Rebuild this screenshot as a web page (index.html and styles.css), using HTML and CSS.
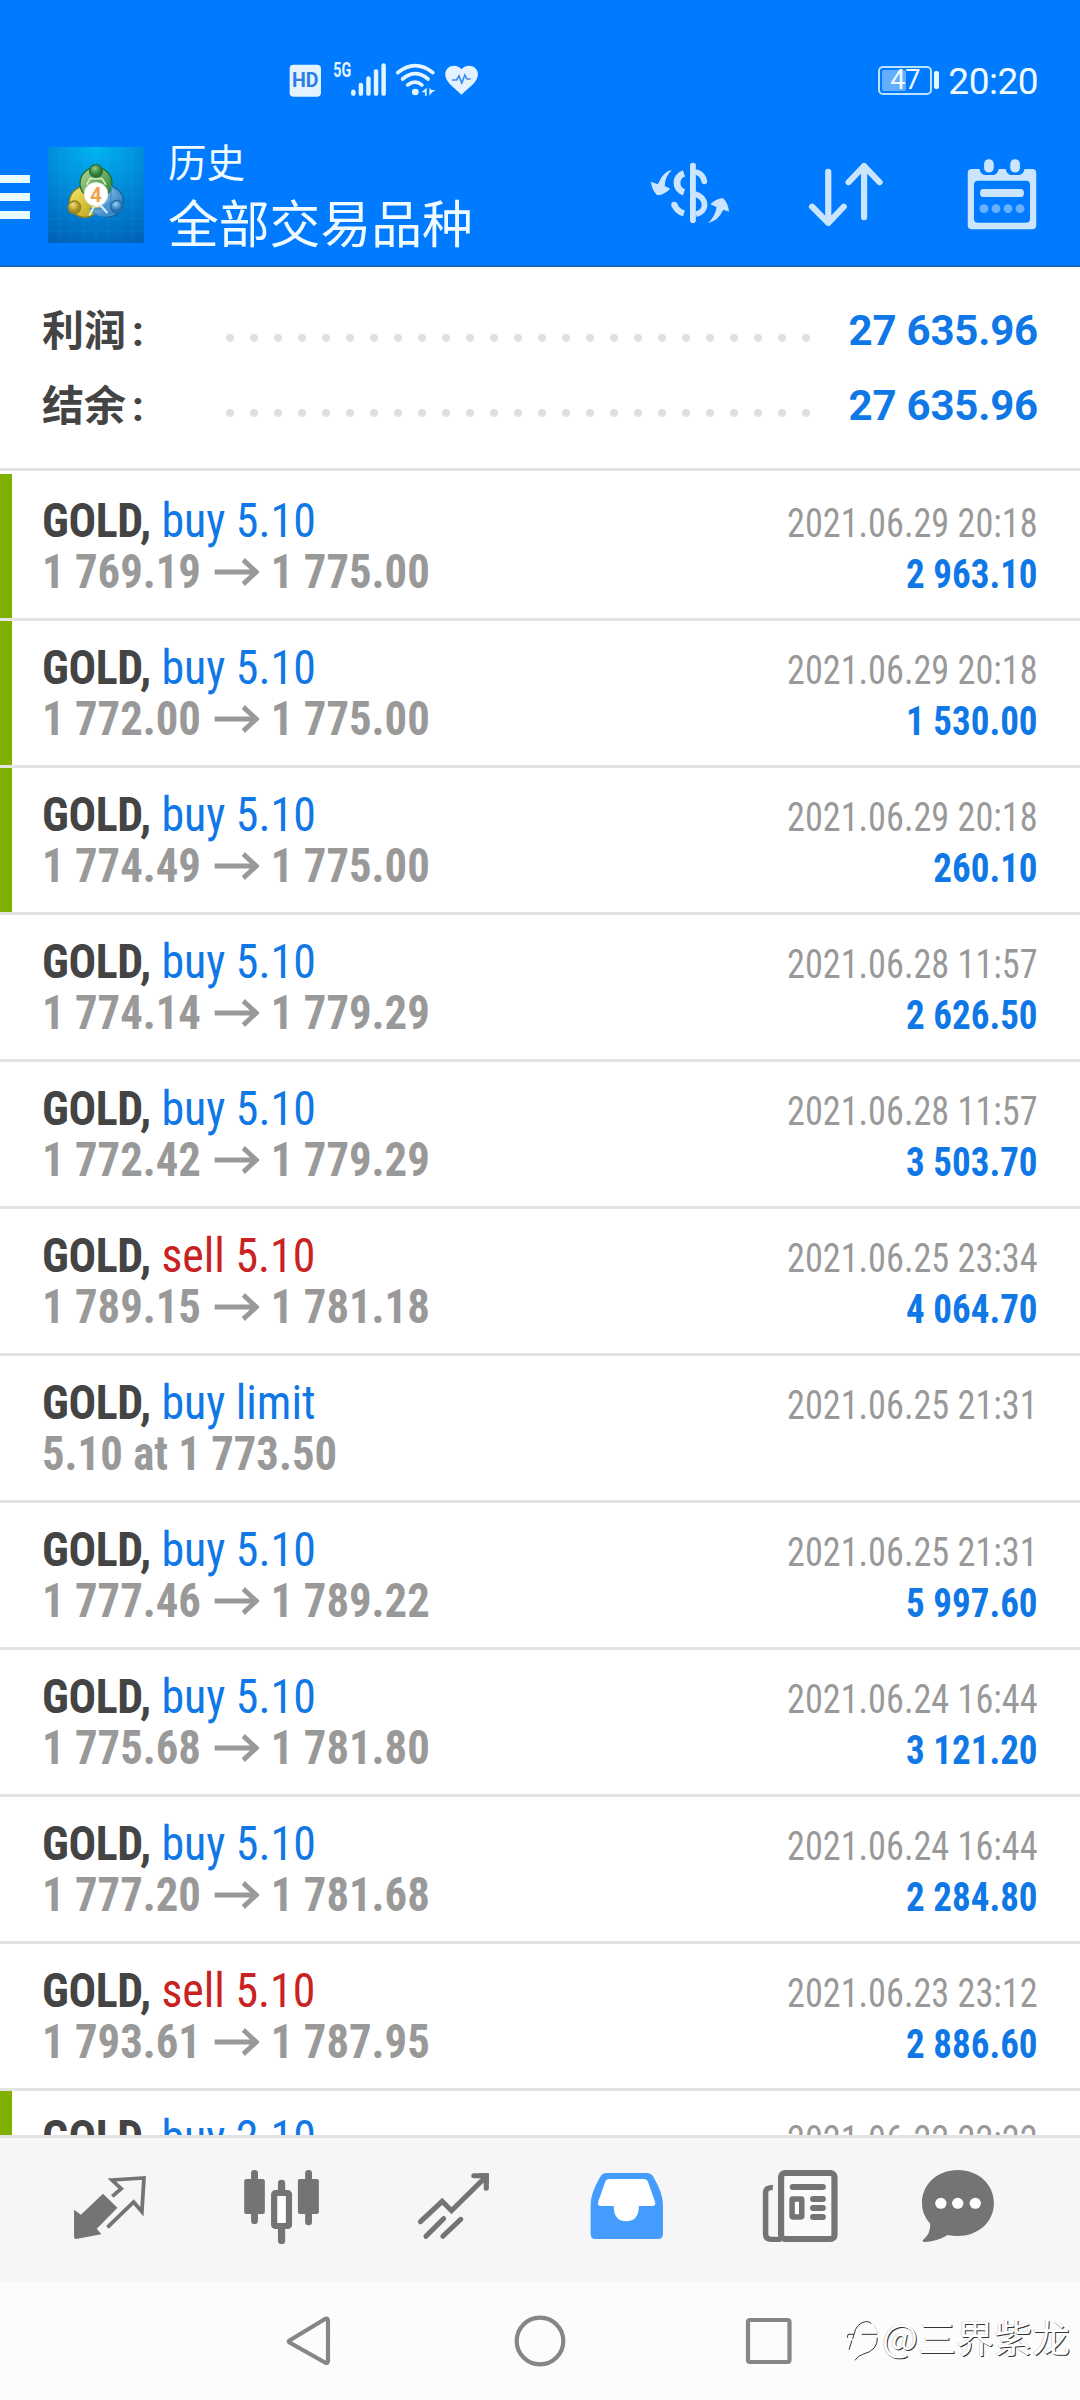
FILE: index.html
```html
<!DOCTYPE html>
<html lang="zh-CN">
<head>
<meta charset="utf-8">
<title>历史</title>
<link rel="stylesheet" href="styles.css">
</head>
<body>
<div class="screen">
  <header class="top">
    <div class="status">
      <svg class="status-icons" viewBox="813 -120 610 354" preserveAspectRatio="none">
        <rect x="841" y="74" width="91" height="96" rx="12" fill="#e4f1ff"/>
        <text class="hd" x="848" y="142" textLength="77" lengthAdjust="spacingAndGlyphs">HD</text>
        <text class="net" x="968" y="111" textLength="52" lengthAdjust="spacingAndGlyphs">5G</text>
        <g stroke="#e4f4ff" stroke-width="13" stroke-linecap="round">
          <path d="M1026 155v6M1048 135v26M1070 115v46M1092 94v67M1114 76v85"/>
        </g>
        <g fill="none" stroke="#e4f4ff" stroke-width="11" stroke-linecap="round">
          <path d="M1155 98Q1206 56 1257 98M1169 117Q1206 85 1243 117M1184 135Q1206 118 1225 135"/>
        </g>
        <circle cx="1206" cy="156" r="10" fill="#e4f4ff"/>
        <path d="M1239 143v24h-5v-10h-10zM1247 143v24l8-10 10-7h-12z" fill="#e4f4ff"/>
        <path d="M1340 164C1318 142 1293 127 1293 103C1293 75 1327 69 1340 88C1353 69 1388 75 1388 103C1388 127 1362 142 1340 164z" fill="#e4f1ff"/>
        <path d="M1312 120h14l7-12 8 21 9-24 6 12h11" fill="none" stroke="#3b8cf0" stroke-width="5"/>
      </svg>
      <div class="status-right">
        <div class="battery"><span class="battery-level"></span><span class="battery-text">47</span></div>
        <span class="battery-nub"></span>
        <span class="clock">20:20</span>
      </div>
    </div>
    <div class="appbar">
      <div class="menu"><i></i><i></i><i></i></div>
      <svg class="logo" viewBox="24 21 288 288">
        <defs>
          <radialGradient id="sky" cx=".5" cy="0" r="1.1"><stop offset="0" stop-color="#00b4f2"/><stop offset=".55" stop-color="#0083d4"/><stop offset="1" stop-color="#0061b4"/></radialGradient>
          <linearGradient id="gr" x2="1" y2="1"><stop offset="0" stop-color="#b8dc9a"/><stop offset="1" stop-color="#1c7a2c"/></linearGradient>
          <linearGradient id="ye" x2="1" y2="1"><stop offset="0" stop-color="#f4ea6a"/><stop offset="1" stop-color="#b89a10"/></linearGradient>
          <linearGradient id="bl" x2="1" y2="1"><stop offset="0" stop-color="#a8dcf6"/><stop offset="1" stop-color="#1a6eb8"/></linearGradient>
          <radialGradient id="gb" cx=".4" cy=".3"><stop offset="0" stop-color="#94cc80"/><stop offset="1" stop-color="#2a7c34"/></radialGradient>
          <radialGradient id="yb" cx=".4" cy=".3"><stop offset="0" stop-color="#f0e47a"/><stop offset="1" stop-color="#a58c1c"/></radialGradient>
          <radialGradient id="bb" cx=".4" cy=".3"><stop offset="0" stop-color="#94d4f4"/><stop offset="1" stop-color="#1f70b4"/></radialGradient>
        </defs>
        <path fill="url(#sky)" d="M24 21h288v288H24z"/>
        <path d="M60 21v288M96 21v288M132 21v288M168 21v288M204 21v288M240 21v288M276 21v288M24 57h288M24 93h288M24 129h288M24 165h288M24 201h288M24 237h288M24 273h288" stroke="#5cc8f4" stroke-opacity=".14" stroke-width="2"/>
        <g stroke-width="4">
          <circle cx="204" cy="184" r="46" fill="url(#bl)" stroke="#17609c"/>
          <circle cx="134" cy="186" r="46" fill="url(#ye)" stroke="#8c7e16"/>
          <circle cx="168" cy="130" r="48" fill="url(#gr)" stroke="#226e2c"/>
          <path d="M215 140q45 35 22 70q-20 24-60 16q-16-6-26-20q36 8 60-20z" fill="url(#bl)" stroke="#3c90cc"/>
          <path d="M140 134l10-18h36l12 18" fill="none" stroke="#d4ecc4" stroke-width="5"/>
          <path d="M148 227l14-28h22l18 20" fill="none" stroke="#d8eefa" stroke-width="6"/>
          <circle cx="168" cy="93" r="19" fill="url(#gb)" stroke="#2a7030"/>
          <circle cx="103" cy="202" r="19" fill="url(#yb)" stroke="#928020"/>
          <circle cx="231" cy="200" r="19" fill="url(#bb)" stroke="#226aa4"/>
        </g>
        <circle cx="168" cy="163" r="36" fill="#fff" stroke="#c8d6c0" stroke-width="2"/>
        <text class="logo-num" x="168" y="186" text-anchor="middle">4</text>
      </svg>
      <div class="titles"><div class="subtitle">历史</div><div class="title">全部交易品种</div></div>
      <div class="tools">
        <svg class="tool" viewBox="209 234 453 444" preserveAspectRatio="none">
          <g fill="none" stroke="#cce5ff" stroke-width="17">
            <path stroke-linecap="round" d="M444 377v164"/>
            <path stroke-width="20" d="M418 400C391 409 391 448 418 457"/>
            <path stroke-width="18" d="M390 494Q397 514 418 520"/>
            <path stroke-linecap="round" d="M456 397Q474 404 477 424"/>
            <path d="M450 462C485 472 488 514 453 523"/>
          </g>
          <circle cx="390" cy="494" r="9" fill="#cce5ff"/>
          <path fill="#cce5ff" d="M383 390Q358 393 342 433L322 425Q324 448 340 466Q364 463 378 446L362 438Q362 410 383 390zM488 549Q518 542 532 509L549 515Q546 488 531 474Q510 476 495 493L513 502Q508 530 488 549z"/>
        </svg>
        <svg class="tool" viewBox="662 234 453 444" preserveAspectRatio="none">
          <path fill="none" stroke="#cce5ff" stroke-width="18" stroke-linecap="round" stroke-linejoin="round" d="M837 395v154M790 500l47 49 45-49M941 532V378M896 427l45-49 45 49"/>
        </svg>
        <svg class="tool" viewBox="1115 234 453 444" preserveAspectRatio="none">
          <path fill="#cce5ff" fill-rule="evenodd" d="M1254 387h22q4 18 18 18h20q14 0 18-18h20q4 18 18 18h19q14 0 18-18h22q12 0 12 12v157q0 12-12 12h-175q-12 0-12-12v-157q0-12 12-12zM1272 422q-12 0-12 12v102q0 12 12 12h139q12 0 12-12v-102q0-12-12-12z"/>
          <rect x="1288" y="356" width="31" height="43" rx="15" fill="#cce5ff" stroke="#007aff" stroke-width="3"/><rect x="1364" y="356" width="31" height="43" rx="15" fill="#cce5ff" stroke="#007aff" stroke-width="3"/>
          <rect x="1278" y="447" width="127" height="24" rx="10" fill="#cce5ff"/>
          <g fill="#66b0ff"><circle cx="1289" cy="506" r="13"/><circle cx="1324" cy="506" r="13"/><circle cx="1359" cy="506" r="13"/><circle cx="1394" cy="506" r="13"/></g>
        </svg>
      </div>
    </div>
  </header>

  <section class="summary">
    <div class="sum-row"><span class="sum-label">利润<span class="colon">:</span></span><span class="dots"></span><span class="sum-value">27 635.96</span></div>
    <div class="sum-row"><span class="sum-label">结余<span class="colon">:</span></span><span class="dots"></span><span class="sum-value">27 635.96</span></div>
  </section>

  <main class="list">
    <div class="deal new"><div class="left"><div class="name"><b>GOLD,</b> <span class="buy">buy 5.10</span></div><div class="price">1 769.19<svg class="arrow" viewBox="0 0 48 28"><path d="M0 14h45M31 2l14 12-14 12"/></svg>1 775.00</div></div><div class="right"><div class="date">2021.06.29 20:18</div><div class="profit">2 963.10</div></div></div>
    <div class="deal new"><div class="left"><div class="name"><b>GOLD,</b> <span class="buy">buy 5.10</span></div><div class="price">1 772.00<svg class="arrow" viewBox="0 0 48 28"><path d="M0 14h45M31 2l14 12-14 12"/></svg>1 775.00</div></div><div class="right"><div class="date">2021.06.29 20:18</div><div class="profit">1 530.00</div></div></div>
    <div class="deal new"><div class="left"><div class="name"><b>GOLD,</b> <span class="buy">buy 5.10</span></div><div class="price">1 774.49<svg class="arrow" viewBox="0 0 48 28"><path d="M0 14h45M31 2l14 12-14 12"/></svg>1 775.00</div></div><div class="right"><div class="date">2021.06.29 20:18</div><div class="profit">260.10</div></div></div>
    <div class="deal"><div class="left"><div class="name"><b>GOLD,</b> <span class="buy">buy 5.10</span></div><div class="price">1 774.14<svg class="arrow" viewBox="0 0 48 28"><path d="M0 14h45M31 2l14 12-14 12"/></svg>1 779.29</div></div><div class="right"><div class="date">2021.06.28 11:57</div><div class="profit">2 626.50</div></div></div>
    <div class="deal"><div class="left"><div class="name"><b>GOLD,</b> <span class="buy">buy 5.10</span></div><div class="price">1 772.42<svg class="arrow" viewBox="0 0 48 28"><path d="M0 14h45M31 2l14 12-14 12"/></svg>1 779.29</div></div><div class="right"><div class="date">2021.06.28 11:57</div><div class="profit">3 503.70</div></div></div>
    <div class="deal"><div class="left"><div class="name"><b>GOLD,</b> <span class="sell">sell 5.10</span></div><div class="price">1 789.15<svg class="arrow" viewBox="0 0 48 28"><path d="M0 14h45M31 2l14 12-14 12"/></svg>1 781.18</div></div><div class="right"><div class="date">2021.06.25 23:34</div><div class="profit">4 064.70</div></div></div>
    <div class="deal"><div class="left"><div class="name"><b>GOLD,</b> <span class="buy">buy limit</span></div><div class="price">5.10 at 1 773.50</div></div><div class="right"><div class="date">2021.06.25 21:31</div></div></div>
    <div class="deal"><div class="left"><div class="name"><b>GOLD,</b> <span class="buy">buy 5.10</span></div><div class="price">1 777.46<svg class="arrow" viewBox="0 0 48 28"><path d="M0 14h45M31 2l14 12-14 12"/></svg>1 789.22</div></div><div class="right"><div class="date">2021.06.25 21:31</div><div class="profit">5 997.60</div></div></div>
    <div class="deal"><div class="left"><div class="name"><b>GOLD,</b> <span class="buy">buy 5.10</span></div><div class="price">1 775.68<svg class="arrow" viewBox="0 0 48 28"><path d="M0 14h45M31 2l14 12-14 12"/></svg>1 781.80</div></div><div class="right"><div class="date">2021.06.24 16:44</div><div class="profit">3 121.20</div></div></div>
    <div class="deal"><div class="left"><div class="name"><b>GOLD,</b> <span class="buy">buy 5.10</span></div><div class="price">1 777.20<svg class="arrow" viewBox="0 0 48 28"><path d="M0 14h45M31 2l14 12-14 12"/></svg>1 781.68</div></div><div class="right"><div class="date">2021.06.24 16:44</div><div class="profit">2 284.80</div></div></div>
    <div class="deal"><div class="left"><div class="name"><b>GOLD,</b> <span class="sell">sell 5.10</span></div><div class="price">1 793.61<svg class="arrow" viewBox="0 0 48 28"><path d="M0 14h45M31 2l14 12-14 12"/></svg>1 787.95</div></div><div class="right"><div class="date">2021.06.23 23:12</div><div class="profit">2 886.60</div></div></div>
    <div class="deal new"><div class="left"><div class="name"><b>GOLD,</b> <span class="buy">buy 2.10</span></div></div><div class="right"><div class="date">2021.06.22 22:22</div></div></div>
  </main>

  <nav class="tabs">
    <svg class="tab" viewBox="69.7 237 499.4 432" preserveAspectRatio="none">
      <path fill="#747474" d="M299 404L341 446L281 509L294 526L221 540Q215 540 215 534V452L235 467z"/>
      <path fill="none" stroke="#747474" stroke-width="11" d="M326 412L352 389L325 363L418 357L412 458L388 429L312 505"/>
    </svg>
    <svg class="tab" viewBox="569.1 237 499.4 432" preserveAspectRatio="none">
      <g fill="#747474"><rect x="709" y="360" width="60" height="105" rx="6"/><rect x="865" y="360" width="61" height="105" rx="6"/><rect x="729" y="333" width="20" height="162" rx="10"/><rect x="886" y="333" width="20" height="166" rx="10"/><rect x="807" y="362" width="21" height="44" rx="10"/><rect x="807" y="498" width="21" height="57" rx="10"/></g>
      <rect x="796" y="402" width="43" height="99" rx="4" fill="#fff" stroke="#747474" stroke-width="18"/>
    </svg>
    <svg class="tab" viewBox="1068.6 237 499.4 432" preserveAspectRatio="none">
      <g fill="none" stroke="#747474" stroke-width="15" stroke-linecap="round"><path d="M1221 488L1284 427L1311 455L1408 356M1376 350H1412V388"/><path d="M1237 532L1288 479M1286 532L1338 481"/></g>
      <path fill="#747474" d="M1390 343h30v32z"/>
    </svg>
    <svg class="tab" viewBox="0 237 499.4 432" preserveAspectRatio="none">
      <path fill="#459cff" d="M193 342H309Q323 342 329 353Q357 402 357 437V526Q357 540 343 540H161Q147 540 147 526V437Q147 402 175 353Q181 342 193 342z"/>
      <path fill="#fff" d="M202 360H300Q310 360 314 370L334 428Q338 441 325 441H287Q287 487 250 487Q214 487 214 441H178Q165 441 169 428L189 370Q192 360 202 360z"/>
    </svg>
    <svg class="tab" viewBox="499.4 237 499.4 432" preserveAspectRatio="none">
      <path fill="none" stroke="#747474" stroke-width="16" d="M676 386Q655 384 655 402V525Q655 541 672 541H700"/>
      <rect x="700" y="342" width="155" height="198" rx="12" fill="#fafafa" stroke="#747474" stroke-width="18"/>
      <g fill="#747474"><rect x="725" y="375" width="105" height="18" rx="9"/><rect x="784" y="411" width="46" height="18" rx="9"/><rect x="784" y="438" width="46" height="18" rx="9"/><rect x="784" y="465" width="46" height="18" rx="9"/></g>
      <rect x="732" y="420" width="28" height="54" rx="2" fill="#fff" stroke="#747474" stroke-width="16"/>
    </svg>
    <svg class="tab tab-chat" viewBox="998.9 237 499.4 432" preserveAspectRatio="none">
      <path fill="#747474" d="M1213 333C1275 333 1318 378 1318 432C1318 492 1270 531 1213 531Q1198 531 1184 528Q1150 549 1116 549Q1108 548 1113 542Q1135 523 1133 494Q1109 467 1109 432C1109 378 1152 333 1213 333z"/>
      <g fill="#fff"><circle cx="1164" cy="433" r="16.5"/><circle cx="1213" cy="433" r="16.5"/><circle cx="1264" cy="433" r="16.5"/></g>
    </svg>
  </nav>

  <footer class="sysnav">
    <svg class="sys" viewBox="0 0 1080 118">
      <g fill="none" stroke="#868686" stroke-width="4.2" stroke-linejoin="round">
        <path d="M289.5 58.5L325 37Q328 35.500 328 39V78.500Q328 82 325 80.500L289.500 60.500Q288 59.500 289.500 58.500z"/>
        <circle cx="540" cy="59" r="23.300"/>
        <rect x="748" y="38" width="41.500" height="42" rx="2"/>
      </g>
    </svg>
    <div class="mark">
      <svg class="mark-logo" viewBox="18 67 102 126"><path fill="none" stroke="#333" stroke-width="3" d="M22 120L24 110H42Q48 78 76 72Q88 70 94 78M42 110L38 124M36 128L27 156M65 110H112M112 120Q114 158 68 170Q54 174 45 188"/><path fill="none" stroke="#ccc" stroke-width="2" d="M98 80Q112 90 113 108"/></svg><span>@三界紫龙</span>
    </div>
  </footer>
</div>
</body>
</html>
```

FILE: styles.css
```css
* { box-sizing: border-box; }
body { margin: 0; background: #fff; }
.screen {
  width: 1080px; height: 2400px; overflow: hidden;
  display: flex; flex-direction: column;
  font-family: Roboto, "Noto Sans CJK SC", sans-serif;
  background: #fff;
}
.top { height: 267px; background: #007aff; border-bottom: 2px solid #1269c0; color: #f0fbff; flex: none; }
.status { height: 118px; display: flex; justify-content: space-between; padding: 0 42px 0 280px; }
.status-icons { width: 210px; height: 118px; }
.hd { font: 700 62px Roboto, sans-serif; fill: #2a7fe6; }
.net { font: 700 58px Roboto, sans-serif; fill: #e4f4ff; }
.status-right { display: flex; align-items: center; height: 42px; margin-top: 59px; }
.battery { position: relative; width: 54px; height: 29px; border: 2px solid #b8e4ff; border-radius: 5px; display: flex; align-items: center; justify-content: center; }
.battery-level { position: absolute; left: 2px; top: 2px; width: 24px; height: 21px; background: #64adff; border-radius: 2px; }
.battery-text { position: relative; font-size: 27px; line-height: 27px; }
.battery-nub { width: 5px; height: 18px; margin-left: 2px; background: #e4f7ff; border-radius: 2px; }
.clock { font-size: 37px; line-height: 42px; margin-left: 9px; padding-top: 3px; letter-spacing: -0.5px; }

.appbar { display: flex; height: 147px; }
.menu { width: 30px; display: flex; flex-direction: column; gap: 10px; padding-top: 57px; flex: none; }
.menu i { height: 8px; background: #e8fbff; }
.logo { width: 96px; height: 96px; margin: 29px 0 0 18px; flex: none; }
.logo-num { font: 700 62px Roboto, sans-serif; fill: #eea450; }
.titles { margin-left: 24px; padding-top: 19px; width: 444px; font-family: "Noto Sans CJK SC", sans-serif; }
.subtitle { font-size: 38.500px; line-height: 46px; }
.title { font-size: 50.800px; line-height: 76px; white-space: nowrap; }
.tools { display: flex; flex: none; }
.tool { width: 156px; height: 148px; flex: none; }

.summary { height: 204px; flex: none; border-bottom: 3px solid #e4e4e4; padding: 26px 42px 0 42px; }
.sum-row { display: flex; height: 75px; align-items: center; }
.sum-label { width: 184px; margin-top: -3px; font: 700 42px/75px "Noto Sans CJK SC", sans-serif; color: #444; }
.colon { font-family: Roboto, sans-serif; margin-left: 6px; }
.dots { width: 600px; height: 8px; margin-top: 14px; background: radial-gradient(circle, #e0e0e0 3.600px, transparent 4.400px) 0 0 / 24px 8px repeat-x; margin-left: -8px; }
.sum-value { margin-left: auto; font-size: 42px; font-weight: 700; letter-spacing: -0.2px; color: #0f78e6; }

.list { height: 1664px; overflow: hidden; padding-top: 3px; flex: none; }
.deal {
  height: 147px; border-bottom: 3px solid #e4e4e4;
  display: flex; justify-content: space-between; padding: 21px 42px 0 42px;
  font-size: 48px; line-height: 51px; font-stretch: 75%; font-family: "Roboto Condensed", Roboto, sans-serif;
  white-space: nowrap;
}
.new { background: linear-gradient(#7fb000, #7fb000) 0 0 / 12px 144px no-repeat; }
.name { transform: scaleX(.955); transform-origin: 0 0; }
.deal b { font-weight: 700; color: #444; letter-spacing: -0.4px; }
.buy { color: #0f78e6; }
.sell { color: #c82222; }
.price { font-weight: 700; color: #999; display: flex; align-items: center; transform: scaleX(.932); transform-origin: 0 0; }
.arrow { width: 48px; height: 28px; margin: 0 13px 0 14px; }
.arrow path { fill: none; stroke: #999; stroke-width: 5; }
.right { text-align: right; padding-top: 3px; font-size: 40px; }
.date { color: #999; transform: scaleX(.906); transform-origin: 100% 0; }
.profit { font-weight: 700; color: #0f78e6; transform: scaleX(.925); transform-origin: 100% 0; }

.tabs { height: 147px; flex: none; background: #f6f6f6; border-top: 3px solid #e2e2e2; display: flex; padding-left: 24px; }
.tab { width: 172px; height: 144px; flex: none; }
.sysnav { height: 118px; background: #fcfcfc; display: flex; position: relative; }
.sys { width: 1080px; height: 118px; }
.mark { position: absolute; left: 846px; top: 26px; display: flex; align-items: center; color: #fff; font: 38px/56px "Noto Sans CJK SC", sans-serif; text-shadow: 1px 1px 0 #333, -0.500px -0.500px 0 #bbb; white-space: nowrap; }
.mark-logo { width: 34px; height: 42px; margin: 10px 2px 0 0; }
```
